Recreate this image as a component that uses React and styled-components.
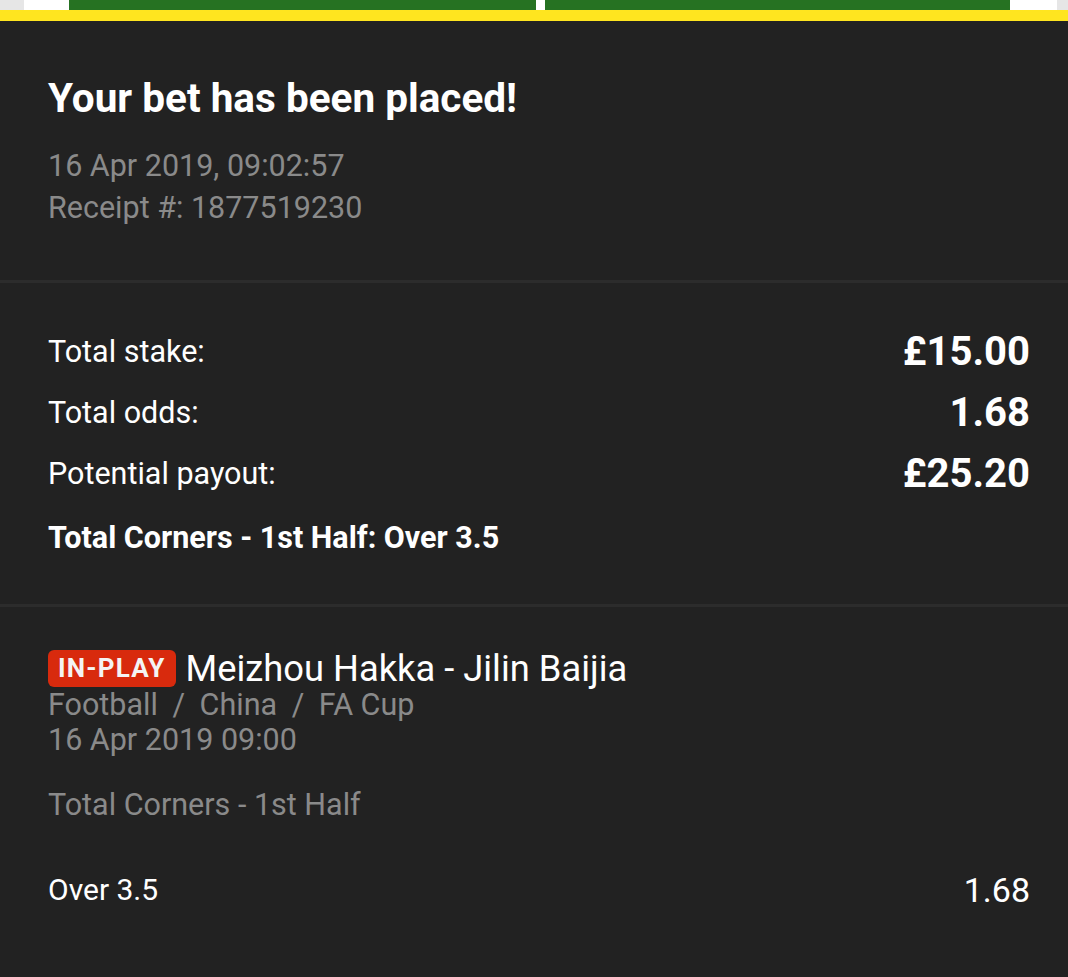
import React from "react";
import styled, { createGlobalStyle } from "styled-components";

const GlobalStyle = createGlobalStyle`
  html, body {
    margin: 0;
    padding: 0;
    background: #222222;
  }
  body {
    font-family: Roboto, "Noto Sans", "Liberation Sans", sans-serif;
    color: #ffffff;
  }
`;

const App = () => {
  return (
    <Page>
      <GlobalStyle />
      <TopStrip>
        <StripPart tone="grey" w={24} />
        <StripPart tone="white" w={45} />
        <StripPart tone="green" w={467} />
        <StripPart tone="white" w={9} />
        <StripPart tone="green" w={465} />
        <StripPart tone="white" w={47} />
        <StripPart tone="grey" w={11} />
      </TopStrip>
      <YellowBar />

      <Header>
        <Title>Your bet has been placed!</Title>
        <Meta>16 Apr 2019, 09:02:57</Meta>
        <Meta>Receipt #: 1877519230</Meta>
      </Header>
      <Divider />

      <Summary>
        <Row>
          <Label>Total stake:</Label>
          <Value>£15.00</Value>
        </Row>
        <Row>
          <Label>Total odds:</Label>
          <Value>1.68</Value>
        </Row>
        <Row>
          <Label>Potential payout:</Label>
          <Value>£25.20</Value>
        </Row>
        <Selection>Total Corners - 1st Half: Over 3.5</Selection>
      </Summary>
      <Divider />

      <Event>
        <EventHead>
          <Badge>IN-PLAY</Badge>
          <EventName>Meizhou Hakka - Jilin Baijia</EventName>
        </EventHead>
        <Crumbs>
          Football <Slash>/</Slash> China <Slash>/</Slash> FA Cup
        </Crumbs>
        <Crumbs>16 Apr 2019 09:00</Crumbs>
        <Market>Total Corners - 1st Half</Market>
        <PickRow>
          <span>Over 3.5</span>
          <PickOdds>1.68</PickOdds>
        </PickRow>
      </Event>
    </Page>
  );
};
export default App;

const Page = styled.div`
  width: 1068px;
  min-height: 977px;
  background: #222222;
  overflow: hidden;
`;

const stripColors = {
  grey: "#e6e6e6",
  white: "#ffffff",
  green: "#267222",
};

const TopStrip = styled.div`
  display: flex;
  height: 10px;
`;

const StripPart = styled.div`
  flex: 0 0 ${p => p.w}px;
  background: ${p => stripColors[p.tone]};
`;

const YellowBar = styled.div`
  height: 11px;
  background: #ffe51f;
`;

const Header = styled.div`
  padding: 53px 38px 51px 48px;
`;

const Title = styled.h1`
  margin: 0 0 23px;
  font-size: 40.5px;
  line-height: 48px;
  font-weight: 700;
  color: #ffffff;
`;

const Meta = styled.div`
  font-size: 30.5px;
  line-height: 42px;
  color: #8a8a8a;
`;

const Divider = styled.div`
  height: 3px;
  background: #2c2c2c;
`;

const Summary = styled.div`
  padding: 38px 38px 46px 48px;
`;

const Row = styled.div`
  display: flex;
  align-items: center;
  justify-content: space-between;
  height: 61px;
`;

const Label = styled.span`
  font-size: 30.5px;
  color: #ffffff;
`;

const Value = styled.span`
  font-size: 40px;
  font-weight: 700;
  color: #ffffff;
`;

const Selection = styled.div`
  margin-top: 14px;
  font-size: 30.5px;
  line-height: 40px;
  font-weight: 700;
  color: #ffffff;
`;

const Event = styled.div`
  padding: 42px 38px 40px 48px;
`;

const EventHead = styled.div`
  display: flex;
  align-items: center;
  gap: 10px;
  height: 38px;
`;

const Badge = styled.span`
  display: inline-flex;
  align-items: center;
  height: 37px;
  padding: 0 10px;
  border-radius: 6px;
  background: #d82a0d;
  color: #f4f4f4;
  font-size: 26px;
  font-weight: 700;
  letter-spacing: 1.2px;
`;

const EventName = styled.span`
  font-size: 36.3px;
  color: #ffffff;
`;

const Crumbs = styled.div`
  font-size: 30.5px;
  line-height: 35px;
  color: #8a8a8a;
`;

const Slash = styled.span`
  margin: 0 7px;
`;

const Market = styled.div`
  margin-top: 30px;
  font-size: 30.5px;
  line-height: 35px;
  color: #8a8a8a;
`;

const PickRow = styled.div`
  display: flex;
  justify-content: space-between;
  align-items: center;
  margin-top: 50px;
  font-size: 30px;
  line-height: 36px;
  color: #ffffff;
`;

const PickOdds = styled.span`
  font-size: 34px;
`;
